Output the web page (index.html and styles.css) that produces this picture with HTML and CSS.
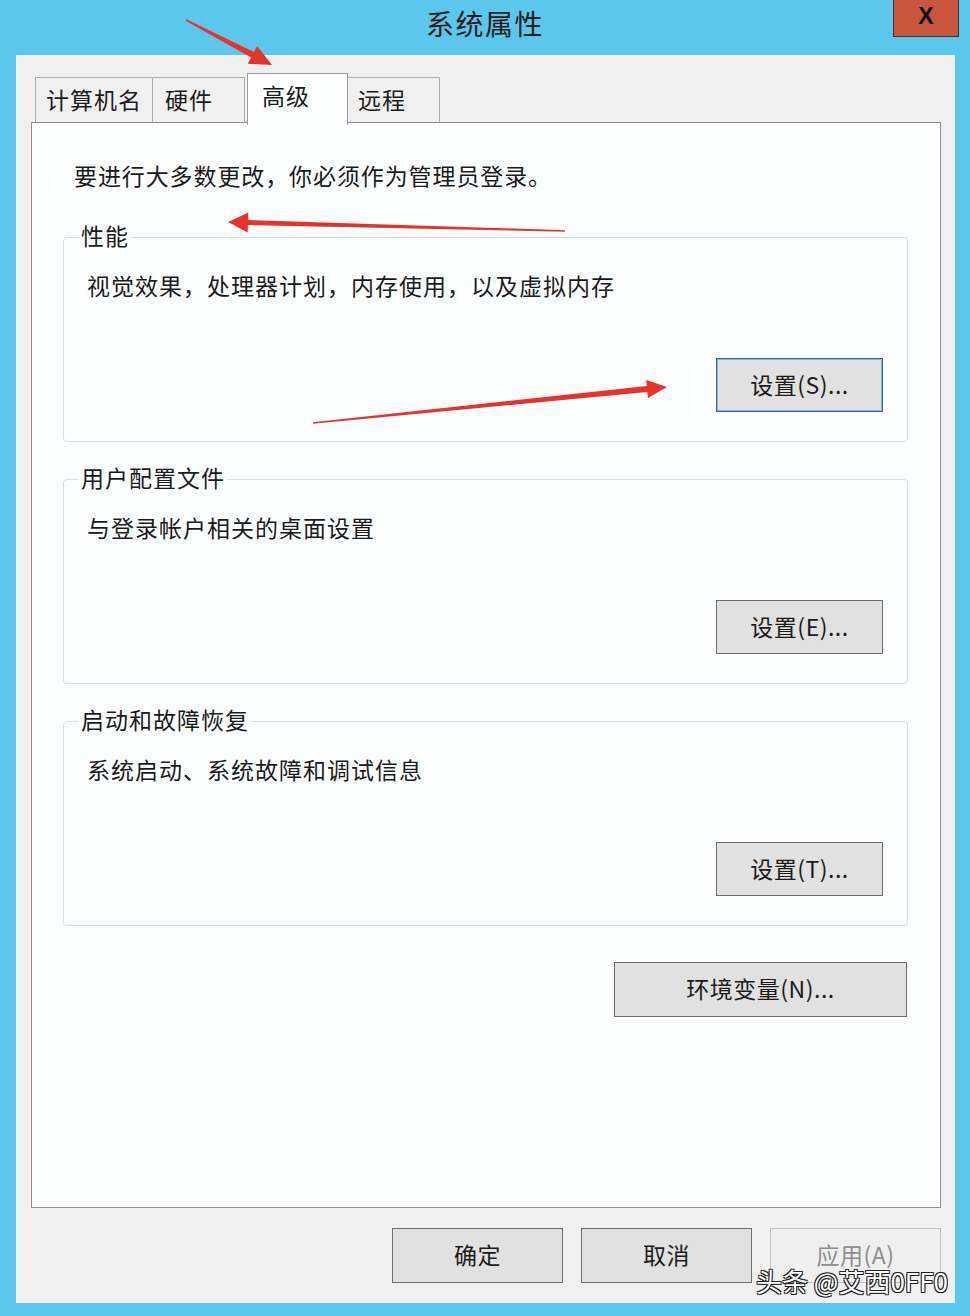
FILE: index.html
```html
<!DOCTYPE html>
<html lang="zh-CN">
<head>
    <meta charset="UTF-8">
    <title>系统属性</title>
    <link rel="stylesheet" href="styles.css">
</head>
<body>
    <div class="window">
        <div class="titlebar">
            <span></span>
            <h1 class="title">系统属性</h1>
            <button class="close-btn" type="button">X</button>
        </div>

        <div class="client">
            <div class="tabs">
                <div class="tab tab-name">计算机名</div>
                <div class="tab tab-hw">硬件</div>
                <div class="tab tab-adv active">高级</div>
                <div class="tab tab-remote">远程</div>
            </div>

            <div class="panel">
                <p class="intro">要进行大多数更改，你必须作为管理员登录。</p>

                <fieldset class="group first">
                    <legend>性能</legend>
                    <p class="group-text">视觉效果，处理器计划，内存使用，以及虚拟内存</p>
                    <div class="group-actions">
                        <button class="btn btn-small focused" type="button">设置(S)...</button>
                    </div>
                </fieldset>

                <fieldset class="group">
                    <legend>用户配置文件</legend>
                    <p class="group-text">与登录帐户相关的桌面设置</p>
                    <div class="group-actions">
                        <button class="btn btn-small" type="button">设置(E)...</button>
                    </div>
                </fieldset>

                <fieldset class="group">
                    <legend>启动和故障恢复</legend>
                    <p class="group-text">系统启动、系统故障和调试信息</p>
                    <div class="group-actions">
                        <button class="btn btn-small" type="button">设置(T)...</button>
                    </div>
                </fieldset>

                <div class="env-row">
                    <button class="btn btn-env" type="button">环境变量(N)...</button>
                </div>
            </div>

            <div class="footer">
                <button class="btn btn-footer" type="button">确定</button>
                <button class="btn btn-footer" type="button">取消</button>
                <button class="btn btn-footer" type="button" disabled>应用(A)</button>
            </div>
        </div>

        <!-- red annotation arrows drawn over the screenshot -->
        <svg class="arrows" width="970" height="1316" viewBox="0 0 970 1316">
            <polygon points="186.4,19.3 253.9,52.1 257.1,45.9 272,65 247.9,63.7 251.1,57.5 185.6,20.7"/>
            <polygon points="565,230.2 248.1,220 248.3,212.5 228,222 247.7,232.5 247.9,225 565,231.8"/>
            <polygon points="312.9,422.2 646.8,386 646.2,380 667,387 648,398 647.4,392 313.1,423.8"/>
        </svg>

        <div class="watermark">头条 @艾西0FF0</div>
    </div>
</body>
</html>
```

FILE: styles.css
```css
* {
    margin: 0;
    padding: 0;
    box-sizing: border-box;
}

body {
    background: #5cc7ec;
    font-family: "Noto Sans CJK SC", "Noto Sans", sans-serif;
    color: #1b1b1b;
}

.window {
    position: relative;
    width: 970px;
    height: 1316px;
    display: flex;
    flex-direction: column;
}

.titlebar {
    height: 55px;
    display: grid;
    grid-template-columns: 1fr auto 1fr;
    align-items: center;
}

.title {
    font-size: 28px;
    font-weight: 400;
    letter-spacing: 1.5px;
    line-height: 34px;
    color: #1e1e1e;
    padding-bottom: 10px;
}

.close-btn {
    justify-self: end;
    align-self: start;
    margin-right: 11px;
    width: 66px;
    height: 37px;
    background: #c9553f;
    border: 1px solid #4a2a24;
    border-top: none;
    font-family: "Liberation Sans", sans-serif;
    font-size: 23px;
    font-weight: 700;
    color: #111;
    line-height: 30px;
    padding-bottom: 4px;
}

.client {
    flex: 1;
    margin: 0 15px 13px 16px;
    background: #f0f0f0;
    padding: 18px 14px 20px 15px;
    display: flex;
    flex-direction: column;
}

.tabs {
    height: 49px;
    margin-left: 4px;
    display: flex;
    align-items: flex-end;
}

.tab {
    height: 45px;
    border: 1px solid #acacac;
    border-bottom: none;
    background: #f0f0f0;
    font-size: 23px;
    letter-spacing: 1px;
    line-height: 30px;
    padding: 6px 0 0 10px;
}

.tab-name {
    width: 118px;
}

.tab-hw {
    width: 93px;
    margin-left: -1px;
    padding-left: 12px;
}

.tab-adv {
    width: 101px;
    margin-left: 2px;
}

.tab-remote {
    width: 93px;
    margin-left: -1px;
}

.tab.active {
    position: relative;
    z-index: 1;
    height: 52px;
    margin-bottom: -3px;
    background: #fdfeff;
    border-color: #9a9a9a;
    padding: 6px 0 0 14px;
}

.panel {
    flex: 1;
    background: #fdfeff;
    border: 1px solid #8d8c95;
    padding: 37px 32px 0 31px;
    display: flex;
    flex-direction: column;
}

.intro {
    font-size: 23px;
    letter-spacing: 0.9px;
    line-height: 30px;
    margin-left: 11px;
}

.group {
    margin-top: 22px;
    border: 1px solid #d6dfe6;
    border-radius: 4px;
    padding: 18px 24px 29px 15px;
}

.group.first {
    margin-top: 32px;
}

.group legend {
    font-size: 23px;
    letter-spacing: 1px;
    line-height: 26px;
    padding: 0 2px 4px;
}

.group-text {
    font-size: 23px;
    letter-spacing: 1px;
    line-height: 30px;
    margin-left: 8px;
}

.group-actions {
    margin-top: 58px;
    display: flex;
    justify-content: flex-end;
}

.btn {
    background: #e1e1e1;
    border: 1px solid #6e6e6e;
    font-family: "Noto Sans CJK SC", "Noto Sans", sans-serif;
    font-size: 23px;
    letter-spacing: 0.5px;
    line-height: 30px;
    color: #1b1b1b;
    padding-bottom: 3px;
}

.btn-small {
    width: 167px;
    height: 54px;
}

.btn.focused {
    border-color: #2f67a3;
    box-shadow: inset 0 0 0 1px #8fb4d8;
}

.env-row {
    margin-top: 36px;
    display: flex;
    justify-content: flex-end;
    padding-right: 1px;
}

.btn-env {
    width: 293px;
    height: 55px;
}

.footer {
    margin-top: 20px;
    display: flex;
    justify-content: flex-end;
    gap: 18px;
}

.btn-footer {
    width: 171px;
    height: 55px;
}

.btn-footer:disabled {
    background: #efefef;
    border-color: #bdbfc2;
    color: #8d8d8d;
}

.arrows {
    position: absolute;
    left: 0;
    top: 0;
    pointer-events: none;
}

.arrows polygon {
    fill: #e7332b;
}

.watermark {
    position: absolute;
    right: 22px;
    bottom: 20px;
    font-size: 26px;
    line-height: 30px;
    color: #fff;
    text-shadow: 1px 1px 0 #222, -1px -1px 0 #222, 1px -1px 0 #222, -1px 1px 0 #222;
}
```
